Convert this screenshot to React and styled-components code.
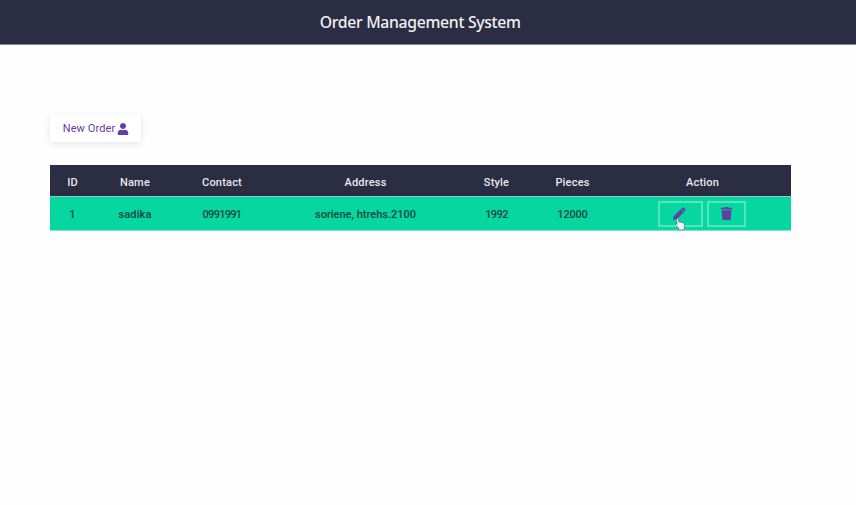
import React from "react";
import styled, { createGlobalStyle } from "styled-components";
import { FaTrash, FaUser } from "react-icons/fa";

const GlobalStyle = createGlobalStyle`
  * { box-sizing: border-box; }
  body {
    margin: 0;
    background: #fefefe;
    font-family: Roboto, "Liberation Sans", sans-serif;
  }
`;

const Header = styled.header`
  height: 45px;
  display: flex;
  align-items: center;
  justify-content: center;
  padding-right: 16px;
  background: #2b2d42;
  border-bottom: 1px solid #85868f;
`;

const Title = styled.h1`
  margin: 0 -20px;
  color: #f1f1f6;
  font: 500 17px/24px "Noto Sans", sans-serif;
  letter-spacing: -0.35px;
  white-space: nowrap;
  transform: scaleX(0.928);
`;

const Content = styled.main`
  padding: 70px 65px 0 50px;
`;

const NewOrderButton = styled.button`
  display: flex;
  align-items: center;
  justify-content: center;
  gap: 2px;
  width: 91px;
  height: 27px;
  margin: 0 0 23px;
  padding: 0 0 0 1px;
  border: 0;
  background: #fff;
  color: #663caa;
  font: 400 11px/14px Roboto, sans-serif;
  letter-spacing: 0.1px;
  box-shadow: 0 2px 6px rgba(50, 50, 80, 0.12);
  white-space: nowrap;
`;

const Table = styled.div`
  width: 741px;
`;

const Row = styled.div`
  display: grid;
  grid-template-columns: 45px 80px 94px 193px 69px 83px 177px;
  align-items: center;
  justify-items: center;
  font-size: 11px;
  font-weight: 500;
  line-height: 14px;
  white-space: nowrap;
`;

const HeadRow = styled(Row)`
  height: 31px;
  padding-top: 4px;
  background: #2b2d42;
  color: #e9e9ef;
`;

const OrderRow = styled(Row)`
  height: 35px;
  background: #06d6a0;
  color: #11473d;
  border-top: 1px solid #8cc9bf;
  border-bottom: 1px solid #7fe6cc;
`;

const Cell = styled.span`
  letter-spacing: ${({ $tracking = 0 }) => $tracking}px;
`;

const OrderCell = styled(Cell)`
  padding-top: 2px;
`;

const Actions = styled.div`
  display: flex;
  gap: 4px;
  margin-right: 1px;
`;

const ActionButton = styled.button`
  position: relative;
  display: flex;
  align-items: center;
  justify-content: center;
  width: ${({ $width }) => $width}px;
  height: 26px;
  padding: 0;
  border: 2px solid #55e4c0;
  background: transparent;
  color: #5d3fa5;
`;

const EditButton = styled(ActionButton)`
  padding-right: 3px;
`;

const Pointer = styled.svg`
  position: absolute;
  left: 14px;
  top: 15px;
`;

function PencilIcon() {
  return (
    <svg width="14" height="14" viewBox="0 0 14 14" fill="currentColor" aria-hidden="true">
      <path d="M8.700 2.300l3 3L4.800 12.200 1 13l.8-3.800z" />
      <path d="M9.200 1.800l.8-.8c.6-.6 1.500-.6 2.100 0l.9.9c.6.6.6 1.500 0 2.100l-.8.8z" />
    </svg>
  );
}

const columns = ["ID", "Name", "Contact", "Address", "Style", "Pieces", "Action"];
const order = [
  { text: "1" },
  { text: "sadika", tracking: 0.1 },
  { text: "0991991", tracking: -0.7 },
  { text: "soriene, htrehs.2100" },
  { text: "1992", tracking: -0.6 },
  { text: "12000", tracking: -0.2 },
];

export default function App() {
  return (
    <>
      <GlobalStyle />
      <Header>
        <Title>Order Management System</Title>
      </Header>
      <Content>
        <NewOrderButton>
          New Order <FaUser size={12} />
        </NewOrderButton>
        <Table role="table">
          <HeadRow role="row">
            {columns.map((label) => (
              <Cell key={label} role="columnheader" $tracking={0.2}>{label}</Cell>
            ))}
          </HeadRow>
          <OrderRow role="row">
            {order.map(({ text, tracking }) => (
              <OrderCell key={text} role="cell" $tracking={tracking}>{text}</OrderCell>
            ))}
            <Actions role="cell">
              <EditButton $width={45} aria-label="Edit order">
                <PencilIcon />
                <Pointer width="12" height="13" viewBox="0 0 12 13" aria-hidden="true">
                  <path
                    d="M2.500 1.500c0-1.200 1.800-1.200 2 0l.5 2.700 1.200-.3.8.6 1.100-.2.800.8c1.400-.2 1.800.6 1.600 1.900l-.3 2.600v2.300H4.700V10L1.500 6.900c-.7-.9.4-1.700 1.300-1l.4.400z"
                    fill="#f2f2f6"
                    stroke="#48616a"
                    strokeWidth=".6"
                  />
                </Pointer>
              </EditButton>
              <ActionButton $width={39} aria-label="Delete order">
                <FaTrash size={13} />
              </ActionButton>
            </Actions>
          </OrderRow>
        </Table>
      </Content>
    </>
  );
}
